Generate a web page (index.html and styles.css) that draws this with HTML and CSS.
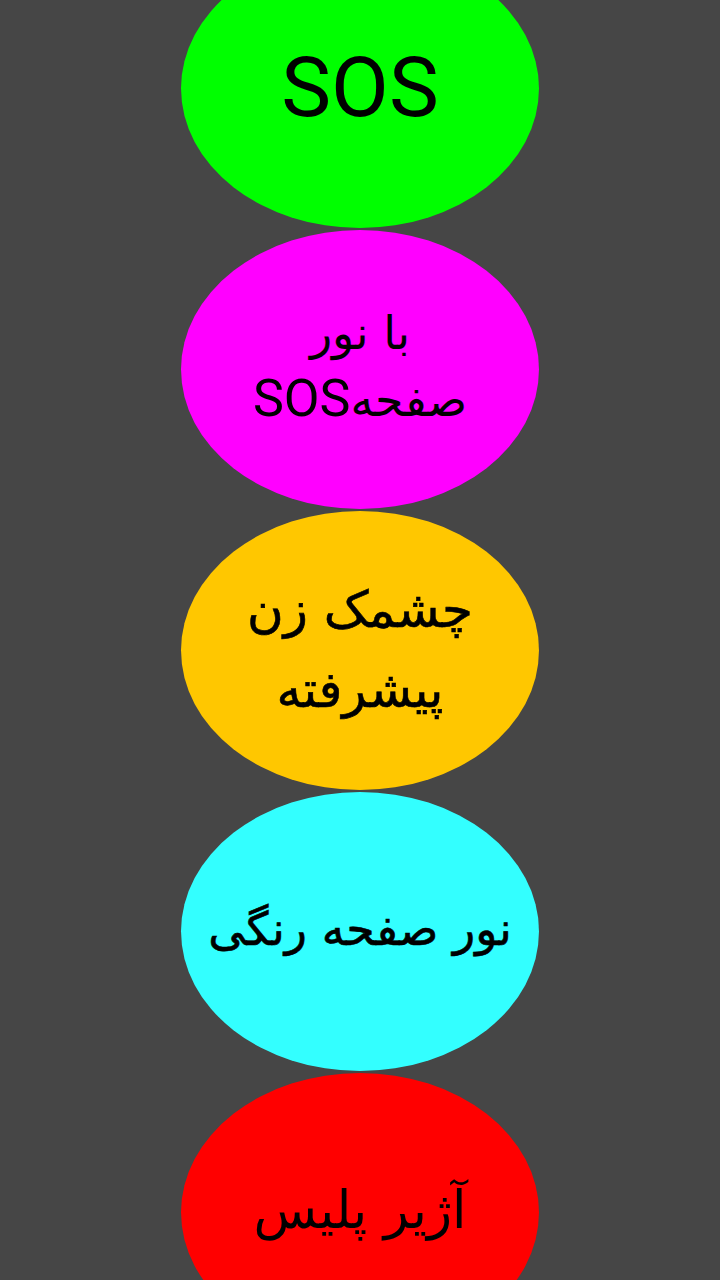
FILE: index.html
```html
<!DOCTYPE html>
<html lang="fa">
<head>
<meta charset="utf-8">
<link rel="stylesheet" href="styles.css">
</head>
<body>
<div class="list">
  <div class="oval green"><span class="sos">SOS</span></div>
  <div class="oval magenta"><span class="label two" dir="rtl">با نور<br>صفحه<span class="sos-small">SOS</span></span></div>
  <div class="oval orange"><span class="label three" dir="rtl">چشمک زن<br>پیشرفته</span></div>
  <div class="oval cyan"><span class="label four" dir="rtl">نور صفحه رنگی</span></div>
  <div class="oval red"><span class="label five" dir="rtl">آژیر پلیس</span></div>
</div>
</body>
</html>
```
FILE: styles.css
```css
html, body {
  margin: 0;
  padding: 0;
  background: #464646;
  height: 1280px;
  overflow: hidden;
}
.list {
  display: flex;
  flex-direction: column;
  align-items: center;
  gap: 2px;
  margin-top: -51px;
}
.oval {
  width: 358px;
  height: 279px;
  border-radius: 50%;
  display: flex;
  align-items: center;
  justify-content: center;
  flex-shrink: 0;
  text-align: center;
  color: #000;
}
.green { background: #00ff00; }
.magenta { background: #ff00ff; }
.orange { background: #ffc700; }
.cyan { background: #33ffff; }
.red { background: #ff0000; }
.sos {
  font-family: Roboto, "DejaVu Sans", sans-serif;
  font-size: 84px;
  line-height: 1;
  margin-top: -2px;
}
.label {
  font-family: "DejaVu Sans", sans-serif;
  white-space: nowrap;
}
.two {
  font-size: 46px;
  line-height: 66px;
  margin-top: -6px;
}
.sos-small {
  font-family: Roboto, sans-serif;
  font-size: 52px;
}
.three {
  font-size: 50px;
  line-height: 80px;
  margin-top: -2px;
  -webkit-text-stroke: 0.6px #000;
}
.four {
  font-size: 46px;
  line-height: 60px;
  margin-top: -6px;
  -webkit-text-stroke: 0.6px #000;
}
.five {
  font-size: 52px;
  line-height: 66px;
  margin-top: -6px;
}
```
